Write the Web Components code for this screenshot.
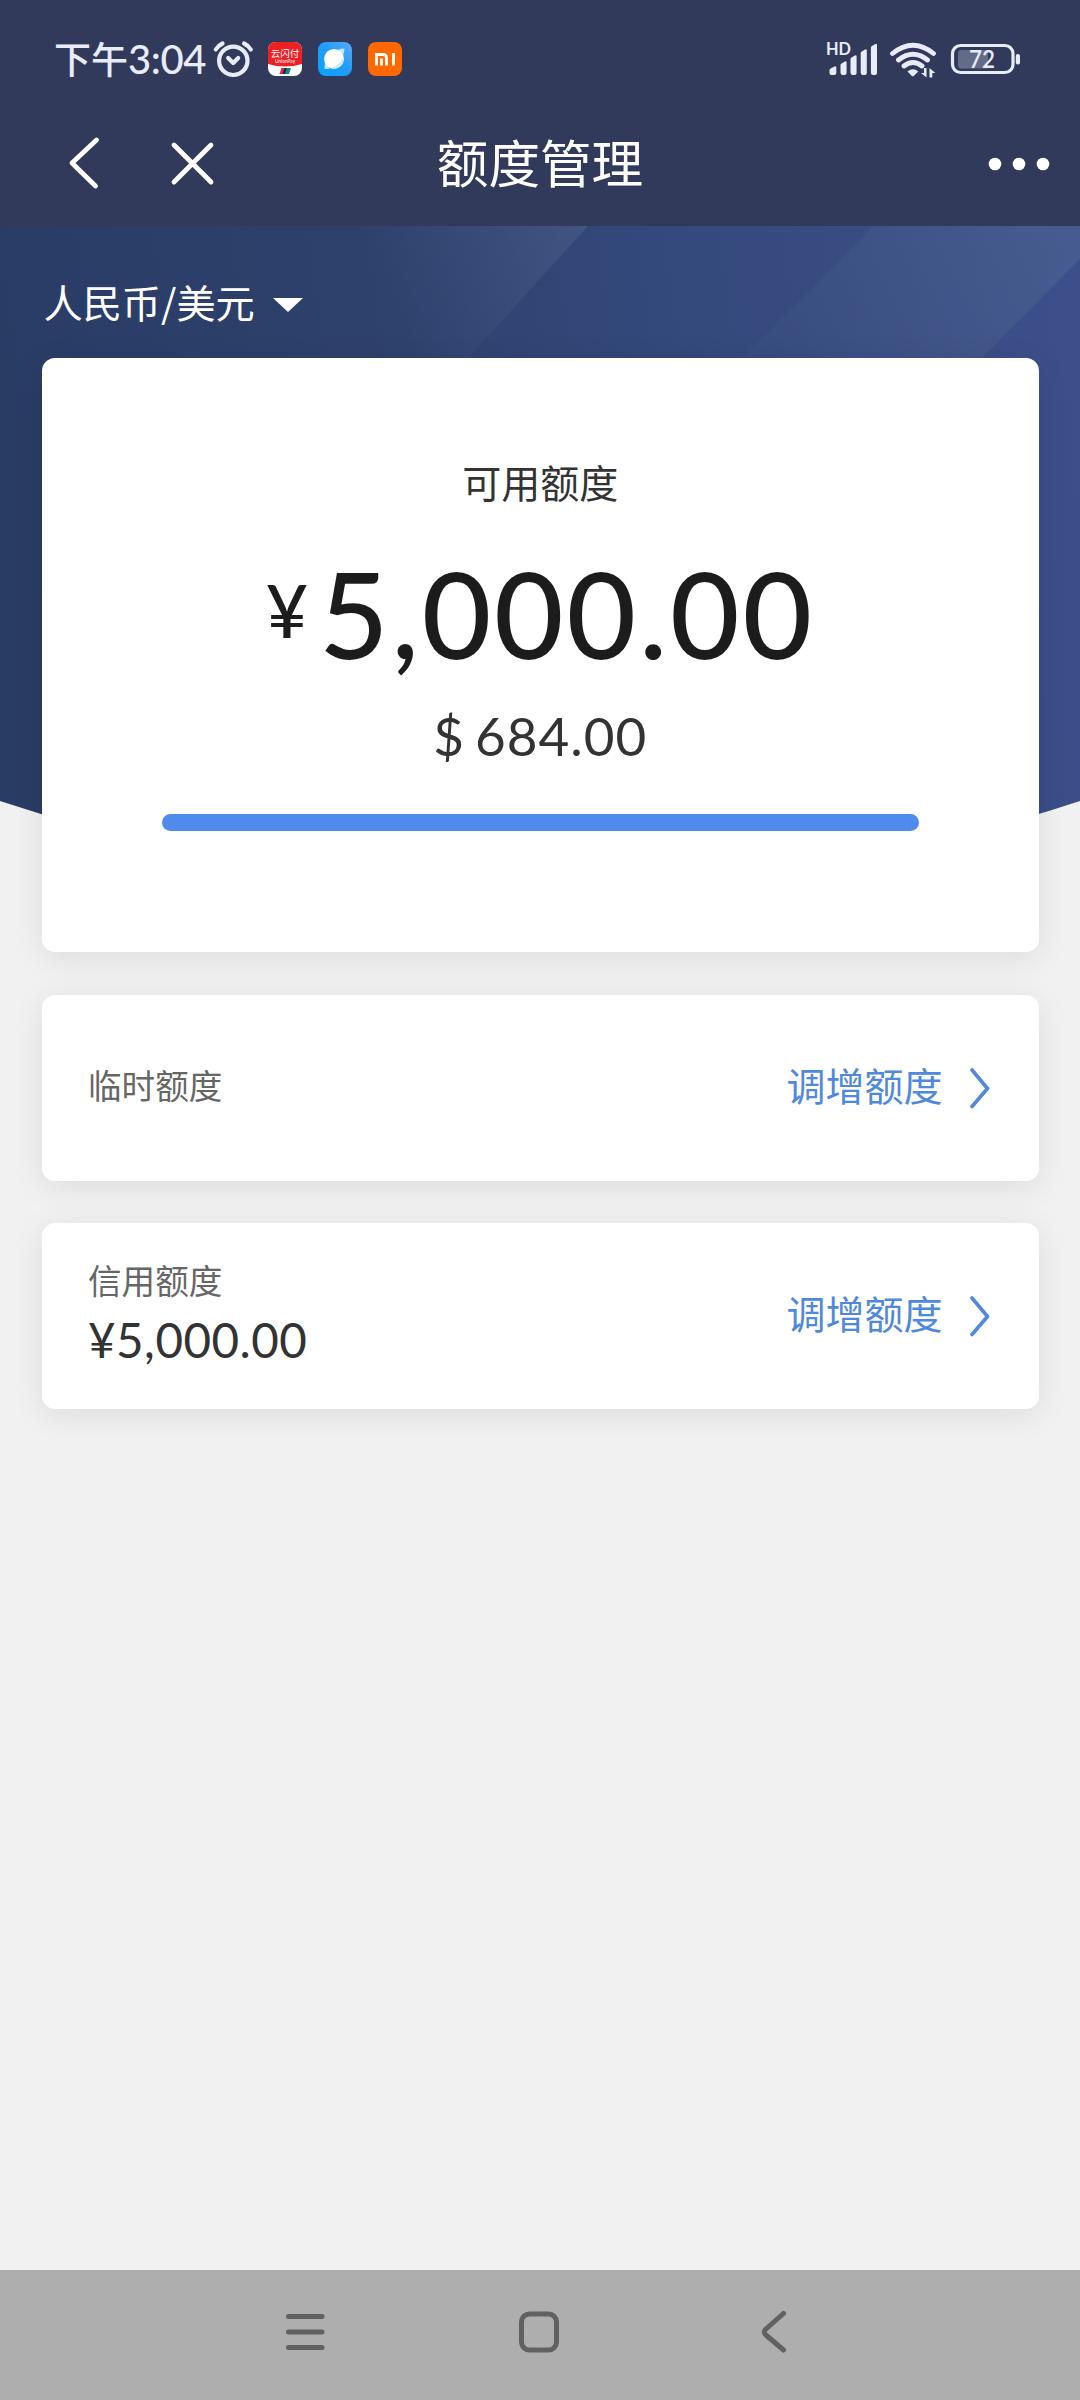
<!DOCTYPE html>
<html lang="zh-CN">
<head>
<meta charset="utf-8">
<title>额度管理</title>
<style>
  html, body { margin: 0; padding: 0; }
  body { width: 1080px; height: 2400px; overflow: hidden; background: #f1f1f1;
    font-family: "Noto Sans CJK SC", sans-serif; --num: Lato, "Noto Sans CJK SC", sans-serif; }
</style>
</head>
<body>
<limit-app></limit-app>
<script>
const define = (name, html) => {
  const t = document.createElement('template');
  t.innerHTML = html;
  customElements.define(name, class extends HTMLElement {
    constructor() { super(); this.attachShadow({ mode: 'open' }).append(t.content.cloneNode(true)); }
  });
};

define('status-bar', `
<style>
  :host { display: flex; height: 100px; box-sizing: border-box; padding: 34px 58px 0 54px; color: #e8ebf8; justify-content: space-between; }
  .l, .r { display: flex; align-items: center; height: 50px; }
  .time { display: flex; align-items: center; font-weight: 500; white-space: nowrap; width: 158px; }
  .cn { font-size: 37px; line-height: 50px; padding-bottom: 3px; }
  .n { font: 500 40px/50px var(--num); letter-spacing: -.4px; }
  svg { display: block; }
</style>
<div class="l">
  <div class="time"><span class="cn">下午</span><span class="n">3:04</span></div>
  <svg width="192" height="50" viewBox="212 34 192 50">
    <g fill="none" stroke="#e8ebf8" stroke-width="4.2" stroke-linecap="round" stroke-linejoin="round">
      <circle cx="233.3" cy="60.8" r="14.2"/><path d="M228.2 58l5 5 5-5M215.8 49.5q2.5-4 6.700-6M250.800 49.500q-2.500-4-6.700-6"/>
    </g>
    <defs><clipPath id="u"><rect x="268" y="42" width="34" height="34" rx="8"/></clipPath>
    <linearGradient id="b" x1="1" y1="0" x2="0" y2="1"><stop offset="0" stop-color="#5aa9f8"/><stop offset=".5" stop-color="#1f9cfb"/><stop offset="1" stop-color="#06a4fd"/></linearGradient></defs>
    <g clip-path="url(#u)"><path fill="#fff" d="M268 42h34v34h-34z"/><path fill="#ee2024" d="M268 42h34v22q-17 5-34 0z"/>
      <path fill="#e0244c" d="M281.500 68h4l-2 6h-4z"/><path fill="#1c2a4a" d="M284.500 68h3l-2 6h-3z"/><path fill="#0e8c80" d="M287 68h4l-2 6h-4z"/></g>
    <text x="285" y="56.500" font-size="9.500" fill="#fff" text-anchor="middle" font-weight="400">云闪付</text>
    <text x="285" y="62.800" font-size="4.800" fill="#fff" text-anchor="middle" font-family="Lato">UnionPay</text>
    <rect x="318" y="42" width="34" height="34" rx="8" fill="url(#b)"/>
    <path d="M338 49.500q4-1 6.500-1-.2 4-1.500 7zM330 68.500q-4 1-5.500 .3 0-4 .7-7z" fill="#c4e6fd"/>
    <circle cx="334" cy="58.800" r="9.900" fill="#fff"/><path d="M343.600 57q.8 8-6 11-4 1.500-7 .3 9-3 13-11.300z" fill="#cfe9fb"/>
    <rect x="368" y="42" width="34" height="34" rx="8" fill="#ff6900"/>
    <path d="M376.500 65.500V54.500h6.500q3.500 0 3.500 3.500v7.500M381.500 58.500v7M393.500 53v12.500" fill="none" stroke="#fff" stroke-width="2.800"/>
  </svg>
</div>
<div class="r">
  <svg width="198" height="50" viewBox="824 34 198 50" fill="#e8ebf8">
    <text x="826" y="55.300" font-size="16.500" font-weight="700" font-family="Lato" textLength="25" lengthAdjust="spacingAndGlyphs">HD</text>
    <path d="M829.500 73v-3q0-1 1-1.500l4-2q1.800-.6 1.800 1V73q0 2-2 2h-2.800q-2 0-2-2zM840.500 73v-8q0-1 1-1.500l3.500-2q1.600-.6 1.600 1V73q0 2-2 2h-2q-2 0-2-2zM850.500 73V59q0-1 1-1.500l3.500-2q1.600-.6 1.600 1V73q0 2-2 2h-2q-2 0-2-2zM860.700 73V53q0-1 1-1.500l3.500-2q1.600-.6 1.600 1V73q0 2-2 2h-2q-2 0-2-2zM870.900 73V47.500q0-1 1-1.500l3.500-2q1.600-.6 1.600 1V73q0 2-2 2h-2q-2 0-2-2z"/>
    <g fill="none" stroke="#e8ebf8" stroke-width="4.800" stroke-linecap="round"><path d="M892.500 53.500q20.500-16.500 41 0M898.500 60q14.500-11.500 29 0M904 66q9-7 18 0"/></g>
    <path d="M907.500 71.500q5.500-4.500 10.800 0L914 75.800q-1.200 1-2.400 0z"/>
    <path d="M926.500 68v9.500l-5.500-4.500h3v-5zM929.500 77.500V68l5.800 5h-3v4.500z"/>
    <rect x="952.500" y="45.500" width="60.500" height="27" rx="8" fill="none" stroke="#e8ebf8" stroke-width="3.200"/>
    <path d="M961 50h27v18.500h-27q-3 0-3-3v-12.500q0-3 3-3z" fill="#646b89"/>
    <rect x="1015.800" y="54" width="4.200" height="10.500" rx="2"/>
    <text x="982" y="68" font-size="25" font-weight="600" font-family="Lato" text-anchor="middle" textLength="26" lengthAdjust="spacingAndGlyphs">72</text>
  </svg>
</div>`);

define('title-bar', `
<style>
  :host { display: grid; grid-template-columns: 230px 1fr 230px; align-items: center; height: 126px; box-sizing: border-box; color: #fff; }
  h1 { margin: 0; font-size: 51.6px; font-weight: 400; text-align: center; line-height: 70px; padding-bottom: 5px; white-space: nowrap; }
  svg { display: block; }
</style>
<svg width="230" height="126" viewBox="0 100 230 126" fill="none" stroke="#fff" stroke-width="4.800" stroke-linecap="round" stroke-linejoin="round"><path d="M96.500 140L72 163l23.500 23M174 145l37 37M211 145l-37 37"/></svg>
<h1><slot></slot></h1>
<svg width="230" height="126" viewBox="850 100 230 126" fill="#fff"><circle cx="995" cy="164" r="6.300"/><circle cx="1019" cy="164" r="6.300"/><circle cx="1043" cy="164" r="6.300"/></svg>`);

define('currency-picker', `
<style>
  :host { display: flex; align-items: center; gap: 18px; height: 132px; padding-left: 43.500px; color: #fff; font-size: 39.200px; line-height: 56px; box-sizing: border-box; white-space: nowrap; }
  i { width: 0; height: 0; border: 15.500px solid transparent; border-top: 14px solid #fff; border-bottom: 0; margin-top: 26px; }
  span { display: block; padding-top: 17px; }
</style>
<span><slot></slot></span><i></i>`);

define('hero-backdrop', `
<style>:host { display: block; } svg { display: block; }</style>
<svg width="1080" height="620" viewBox="0 226 1080 620">
  <defs>
    <linearGradient id="g" gradientUnits="userSpaceOnUse" x1="0" y1="500" x2="1080" y2="330"><stop offset="0" stop-color="#293c64"/><stop offset=".35" stop-color="#2e416c"/><stop offset=".6" stop-color="#33487a"/><stop offset="1" stop-color="#3d4f8b"/></linearGradient>
    <linearGradient id="s1" gradientUnits="userSpaceOnUse" x1="588" y1="215" x2="390" y2="300"><stop offset="0" stop-color="#fff" stop-opacity=".075"/><stop offset="1" stop-color="#fff" stop-opacity="0"/></linearGradient>
    <linearGradient id="s2" gradientUnits="userSpaceOnUse" x1="1070" y1="226" x2="800" y2="380"><stop offset="0" stop-color="#c0ffc0" stop-opacity=".07"/><stop offset="1" stop-color="#d0ffd0" stop-opacity=".015"/></linearGradient>
    <clipPath id="c"><path d="M0 226h1080v575Q810 890 540 890T0 801z"/></clipPath>
  </defs>
  <g clip-path="url(#c)"><path fill="url(#g)" d="M0 226h1080v664H0z"/>
  <path fill="url(#s1)" d="M588 226L430 400H200V226z"/><path fill="url(#s2)" d="M874 226h206v33L940 400H700z"/></g>
</svg>`);

define('white-card', `
<style>:host { display: block; box-sizing: border-box; background: #fff; border-radius: 13px; box-shadow: 0 6px 32px rgba(0,0,0,.085); }</style><slot></slot>`);

define('available-limit', `
<style>
  :host { display: flex; flex-direction: column; align-items: center; height: 594px; box-sizing: border-box; padding-top: 95px; color: #333; }
  .label { font-size: 39px; line-height: 56px; }
  .main { display: flex; align-items: flex-start; margin-top: 31px; color: #1c1c1c; font-family: var(--num); font-weight: 500; }
  .cur { font-size: 73px; line-height: 90px; margin-right: 11px; margin-top: 25px; }
  .amt { font-size: 120px; line-height: 146px; letter-spacing: 2.8px; }
  .sub { display: flex; gap: 10px; font: 400 53px/64px var(--num); letter-spacing: 1px; margin-top: 18px; }
  .bar { width: 757px; height: 17px; border-radius: 8.5px; background: #4f8aec; margin-top: 46px; }
</style>
<div class="label">可用额度</div>
<div class="main"><span class="cur">¥</span><span class="amt">5,000.00</span></div>
<div class="sub"><span>$</span><span>684.00</span></div>
<div class="bar"></div>`);

define('limit-row', `
<style>
  :host { display: flex; align-items: center; justify-content: space-between; height: 186px; box-sizing: border-box; padding: 0 49px 0 46px; }
  .l { display: flex; flex-direction: column; gap: 6px; padding-bottom: 6px; }
  .label { font-size: 33.6px; line-height: 48px; color: #666; }
  ::slotted([slot=amount]) { font: 400 47.500px/60px var(--num); letter-spacing: .5px; color: #333; }
  .r { display: flex; align-items: center; gap: 26px; font-size: 39px; line-height: 56px; color: #5088dc; }
  .r span { padding-bottom: 9px; }
  svg { display: block; margin-bottom: 1px; }
</style>
<div class="l"><span class="label"><slot></slot></span><slot name="amount"></slot></div>
<div class="r"><span>调增额度</span><svg width="21" height="42" viewBox="0 0 21 42" fill="none" stroke="#5088dc" stroke-width="3.600" stroke-linecap="round" stroke-linejoin="round"><path d="M3 3l15.500 18.500L3 39.500"/></svg></div>`);

define('nav-bar', `
<style>:host { display: flex; height: 130px; background: #aeaeae; } svg { display: block; }</style>
<svg width="1080" height="130" viewBox="0 2270 1080 130" fill="none" stroke="#616161" stroke-width="5" stroke-linecap="round" stroke-linejoin="round">
  <path d="M288.500 2316.600h33.500M288.500 2332h33.500M288.500 2347.400h33.500"/><rect x="521.500" y="2314" width="35" height="36" rx="8"/>
  <path d="M783.500 2313.500L766.500 2328.500Q762 2332 766.500 2335.500L783.500 2350"/>
</svg>`);

define('limit-app', `
<style>
  :host { display: flex; flex-direction: column; height: 2400px; }
  header { background: #323a5b; height: 226px; }
  main { flex: 1; display: grid; grid-template: 1fr / 1fr; }
  hero-backdrop, .c { grid-area: 1 / 1; }
  .c { display: flex; flex-direction: column; z-index: 1; }
  .cards { display: flex; flex-direction: column; padding: 0 41.500px 0 42px; }
  white-card + white-card { margin-top: 43px; } white-card + white-card + white-card { margin-top: 42px; }
</style>
<header><status-bar></status-bar><title-bar>额度管理</title-bar></header>
<main>
  <hero-backdrop></hero-backdrop>
  <div class="c">
    <currency-picker>人民币/美元</currency-picker>
    <div class="cards">
      <white-card><available-limit></available-limit></white-card>
      <white-card><limit-row>临时额度</limit-row></white-card>
      <white-card><limit-row>信用额度<span slot="amount">¥5,000.00</span></limit-row></white-card>
    </div>
  </div>
</main>
<nav-bar></nav-bar>`);
</script>
</body>
</html>
